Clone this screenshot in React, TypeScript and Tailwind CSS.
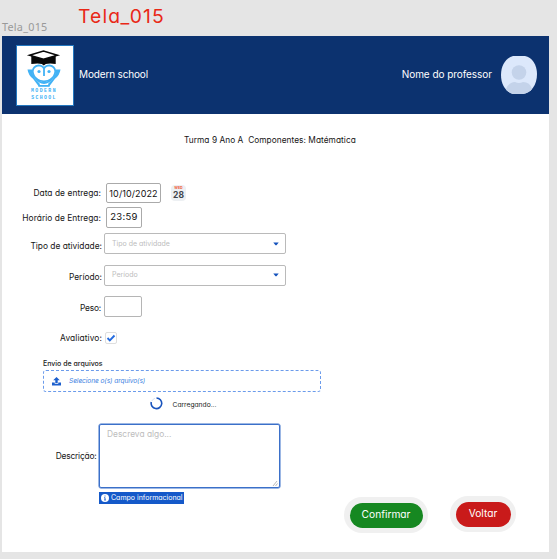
import React from 'react';

const text = "font-['Inter','Noto_Sans',sans-serif] [font-feature-settings:'cv11'] whitespace-nowrap";

function Label({ children, className = '' }: { children: React.ReactNode; className?: string }) {
  return <label className={`text-right text-[8.4px] leading-3 text-[#151515] ${className}`}>{children}</label>;
}

function Logo() {
  return (
    <div className="h-[61px] w-[58px] border border-[#2478c0] bg-white">
      <svg viewBox="0 0 56 59" className="h-full w-full">
        <path d="M14.300 10v8q7-1 10.500 0l2 1.500l2-1.500q4-1 9.900 0v-8z" fill="#080808" />
        <path d="M12.500 9.300L26.500 5l14 4.300l-14 4z" fill="#fff" stroke="#080808" strokeWidth="1.500" />
        <path d="M10.500 23.500H15q0 5 3 9l5 5.500l-1 2.700l-6-8q-4.500-3-5.500-9.200zM43.500 23.500H39q0 5-3 9l-5 5.500l1 2.700l6-8q4.500-3 5.500-9.200z" fill="#42b2f5" />
        <g fill="none" stroke="#42b2f5" strokeWidth="1.800" strokeLinejoin="round">
          <path d="M21.500 39.900h11" />
          <path d="M27 30v-7.500q-1.500-3.200-5.500-3.200q-5.500 1-5.800 6q.3 5 4.300 8q3 2 7 2t7-2q4-3 4.300-8q-.3-5-5.800-6q-4 0-5.500 3.200" />
          <path d="M19 32q3 5 8 5t8-5" />
        </g>
        <circle cx="22" cy="25.500" r="1.600" fill="#42b2f5" />
        <circle cx="32" cy="25.500" r="1.600" fill="#42b2f5" />
        <g fill="#42b2f5" fontFamily="Liberation Mono, monospace" fontSize="4.800" fontWeight="bold">
          <text x="14" y="46" textLength="24.500">MODERN</text>
          <text x="14.300" y="52.700" textLength="24">SCHOOL</text>
        </g>
      </svg>
    </div>
  );
}

function Avatar() {
  return (
    <svg width="38" height="40" viewBox="0 0 38 40" className="ml-[7px]">
      <defs><clipPath id="face"><path d="M13 1h12c7 1 12 9 12 18c0 11-6 19-14 20H13C6 37 1 30 1 20S6 3 13 1z" /></clipPath></defs>
      <g clipPath="url(#face)">
        <rect width="38" height="40" fill="#dce8fb" />
        <circle cx="19" cy="17.500" r="7.300" fill="#c4d3ea" />
        <path d="M6 40v-6q3-7 9-7q4 2 8 0q7 0 9 7v6z" fill="#c4d3ea" />
      </g>
    </svg>
  );
}

function Select({ placeholder }: { placeholder: string }) {
  return (
    <div className="ml-[2px] flex h-[21px] w-[182px] items-center justify-between rounded-[2px] border border-[#bababa] bg-white pl-[7px] pr-[6px] text-[7px] text-[#bdbdbd]">
      <span className="mt-px">{placeholder}</span>
      <svg width="6" height="4" viewBox="0 0 6 4"><path d="M.3.500h5.400L3.500 3.200h-1z" fill="#1553bd" /></svg>
    </div>
  );
}

export default function App() {
  return (
    <div className={`h-[559px] w-[557px] overflow-hidden bg-[#e5e5e5] ${text}`}>
      <div className="flex h-[36px] items-start">
        <span className="ml-[2px] mt-[20px] w-[76px] font-['Noto_Sans',sans-serif] text-[10.8px] leading-[14px] tracking-[0.25px] text-[#999]">Tela_015</span>
        <span className="mt-[4px] text-[19.300px] leading-6 tracking-[1.150px] text-[#e92817]">Tela_015</span>
      </div>
      <main className="ml-[2px] h-[516px] w-[547px] bg-white">
        <header className="flex h-[78px] items-center bg-[#0c326f] pl-[14px] pr-[11px] text-[10px] tracking-[-0.05px] text-white">
          <Logo />
          <span className="ml-[5px] mt-[-2px] tracking-[-0.150px]">Modern school</span>
          <span className="ml-auto mr-px mt-[-2px]">Nome do professor</span>
          <Avatar />
        </header>
        <p className="ml-[182px] mt-[20px] h-3 whitespace-pre text-[8.300px] leading-3 tracking-[0.050px] text-[#151515]">Turma 9 Ano A  Componentes: Matématica</p>

        <div className="mt-[36px] flex h-[22px] items-center">
          <Label className="w-[99px] tracking-[0.050px]">Data de entrega:</Label>
          <div className="ml-[5px] flex h-[20px] w-[55px] items-center justify-center rounded-[2px] border border-[#aaa] pt-px text-[9px] tracking-[0.100px] text-[#111]">10/10/2022</div>
          <div className="ml-[10px] flex h-[16px] w-[15px] flex-col items-center rounded-[4px] bg-[#edf0f3]">
            <span className="mt-[1px] text-[3.500px] font-bold leading-[4px] text-[#f15b35]">WED</span>
            <span className="mt-px text-[8.500px] font-bold leading-[8px] text-[#42474d]">28</span>
          </div>
        </div>
        <div className="mt-[3px] flex h-[21px] items-center">
          <Label className="w-[99px] tracking-[0.050px]">Horário de Entrega:</Label>
          <div className="ml-[5px] flex h-[21px] w-[36px] items-center justify-center rounded-[2px] border border-[#aaa] pb-px text-[9.500px] tracking-[0.300px] text-[#111]">23:59</div>
        </div>
        <div className="mt-[5px] flex h-[21px] items-center">
          <Label className="mt-[5px] w-[100px]">Tipo de atividade:</Label><Select placeholder="Tipo de atividade" />
        </div>
        <div className="mt-[11px] flex h-[20px] items-center">
          <Label className="mt-[4px] w-[100px]">Período:</Label><Select placeholder="Período" />
        </div>
        <div className="mt-[11px] flex h-[21px] items-center">
          <Label className="mt-[3px] w-[99px] tracking-[-0.200px]">Peso:</Label>
          <div className="ml-[3px] h-[21px] w-[38px] rounded-[2px] border border-[#b5b5b5]" />
        </div>
        <div className="mt-[15px] flex h-[12px] items-center">
          <Label className="w-[100px] tracking-[0.100px]">Avaliativo:</Label>
          <div className="ml-[3px] flex h-[12px] w-[12px] items-center justify-center rounded-[2px] border border-[#dedede]">
            <svg width="10" height="8" viewBox="0 0 10 8"><path d="M1.500 4l2.300 2.300L8.500 1.500" fill="none" stroke="#246bdf" strokeWidth="1.900" /></svg>
          </div>
        </div>

        <section className="ml-[41px] mt-[14px] w-[278px]">
          <div className="h-[12px] text-[7px] font-medium leading-[12px] text-[#222]">Envio de arquivos</div>
          <div className="flex h-[22px] items-center rounded-[3px] border border-dashed border-[#6b9beb] pl-[8px] text-[#1c5fcd]">
            <svg width="9" height="9" viewBox="0 0 9 9"><path d="M4.500 0L1.200 3.200H3.300V6h2.400V3.200h2.100zM0 5.600h2.700v1.100h3.600V5.600H9v2.900H0z" fill="currentColor" /></svg>
            <span className="ml-[8px] mt-[2px] text-[6.600px] italic tracking-[-0.080px] text-[#4384e2]">Selecione o(s) arquivo(s)</span>
          </div>
          <div className="ml-[107px] mt-[5px] flex h-[14px] items-center">
            <svg width="13" height="13" viewBox="0 0 13 13" className="-mt-px"><path d="M6.500 1A5.300 5.300 0 1 1 1.300 5" fill="none" stroke="#1853bd" strokeWidth="1.600" /><path d="M1.800 4A5.300 5.300 0 0 1 5 1.300" fill="none" stroke="#d6e2f5" strokeWidth="1" /></svg>
            <span className="ml-[9.500px] mt-[3px] text-[6.700px] text-[#222]">Carregando...</span>
          </div>
        </section>

        <div className="mt-[13px] flex h-[64px] items-center">
          <Label className="w-[94.500px] tracking-[-0.200px]">Descrição:</Label>
          <div className="ml-[2.500px] flex h-[64px] w-[181px] justify-between rounded-[2px] border-[1.500px] border-[#3b70c9] pl-[7px] pt-[3px] text-[8.400px] leading-3 text-[#bdbdbd] shadow-[0_0_0_0.5px_#3b70c9]">
            <span>Descreva algo...</span>
            <svg width="7" height="7" viewBox="0 0 7 7" className="self-end"><path d="M1 6L5 1M3.500 6L5.500 3.500" stroke="#888" strokeWidth=".6" /></svg>
          </div>
        </div>
        <div className="ml-[97px] mt-[4px] flex h-[12px] w-[85px] items-center bg-[#1559c9] pl-[2px] text-white">
          <svg width="8" height="8" viewBox="0 0 8 8"><circle cx="4" cy="4" r="4" fill="#fff" /><path d="M4 1.500v1M3.300 3.600H4v2.300M3.200 6h1.700" fill="none" stroke="#1559c9" strokeWidth=".9" /></svg>
          <span className="ml-[2px] mt-px text-[7px]">Campo informacional</span>
        </div>

        <div className="ml-[342px] mt-[-8px] flex items-start text-[10.200px] text-white">
          <div className="mt-px flex h-[36px] w-[84px] items-center justify-center rounded-full bg-[#f0f0f0]">
            <button className="h-[25px] w-[73px] rounded-full bg-[#168821]">Confirmar</button>
          </div>
          <div className="ml-[22px] flex h-[36px] w-[66px] items-center justify-center rounded-full bg-[#f0f0f0]">
            <button className="h-[25px] w-[55px] rounded-full bg-[#c91a1a]">Voltar</button>
          </div>
        </div>
      </main>
    </div>
  );
}
